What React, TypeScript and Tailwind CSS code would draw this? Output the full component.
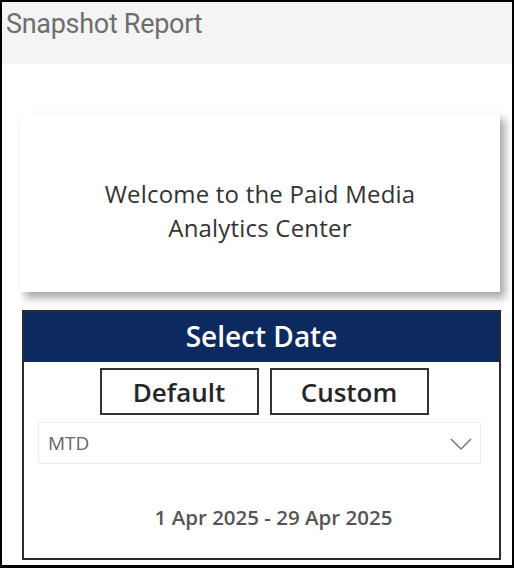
const segoe = "font-['Open_Sans',sans-serif]";

export default function App() {
  return (
    <div className="w-[514px] h-[568px] bg-white border-black border-l-2 border-r-2 border-t-2 border-b-[3px] flex flex-col overflow-hidden">
      <div className="h-[62px] shrink-0 bg-[#f4f4f4] pl-[4px] pt-[5px]">
        <h1 className="font-['Roboto',sans-serif] text-[27px] leading-[34px] text-[#6e6e6e] tracking-[-0.3px]">
          Snapshot Report
        </h1>
      </div>

      <div className={`flex flex-col pl-[18px] pr-[10px] ${segoe}`}>
        <div className="mt-[49px] w-[480px] h-[179px] bg-white shadow-[5px_6px_8px_rgba(0,0,0,0.35)] flex items-center justify-center">
          <p className="text-center text-[24px] leading-[34px] text-[#333] pt-[16px] tracking-[0.2px]">
            Welcome to the Paid Media
            <br />
            Analytics Center
          </p>
        </div>

        <div className="mt-[18px] ml-[2px] w-[479px] h-[250px] border-2 border-[#2b2b2b] flex flex-col">
          <div className="h-[50px] shrink-0 bg-[#0d2a60] flex items-center justify-center pb-[3px]">
            <span className="text-white text-[28px] font-semibold leading-none">Select Date</span>
          </div>

          <div className="flex justify-center gap-[11px] mt-[6px] pl-[5px]">
            <button className="w-[159px] h-[47px] border-2 border-[#333] text-[26px] font-semibold text-[#262626] leading-none">
              Default
            </button>
            <button className="w-[159px] h-[47px] border-2 border-[#333] text-[26px] font-semibold text-[#262626] leading-none">
              Custom
            </button>
          </div>

          <div className="mt-[7px] ml-[14px] mr-[18px] h-[42px] border border-[#ececec] flex items-center justify-between pl-[9px] pr-[8px]">
            <span className="text-[19px] text-[#666]">MTD</span>
            <svg width="22" height="13" viewBox="0 0 22 13" fill="none" className="mt-[2px]">
              <polyline points="1,1 11,11 21,1" stroke="#777" strokeWidth="1.5" />
            </svg>
          </div>

          <div className="mt-[38px] pl-[24px] text-center text-[20.5px] font-semibold text-[#555]">
            1 Apr 2025 - 29 Apr 2025
          </div>
        </div>
      </div>
    </div>
  );
}
